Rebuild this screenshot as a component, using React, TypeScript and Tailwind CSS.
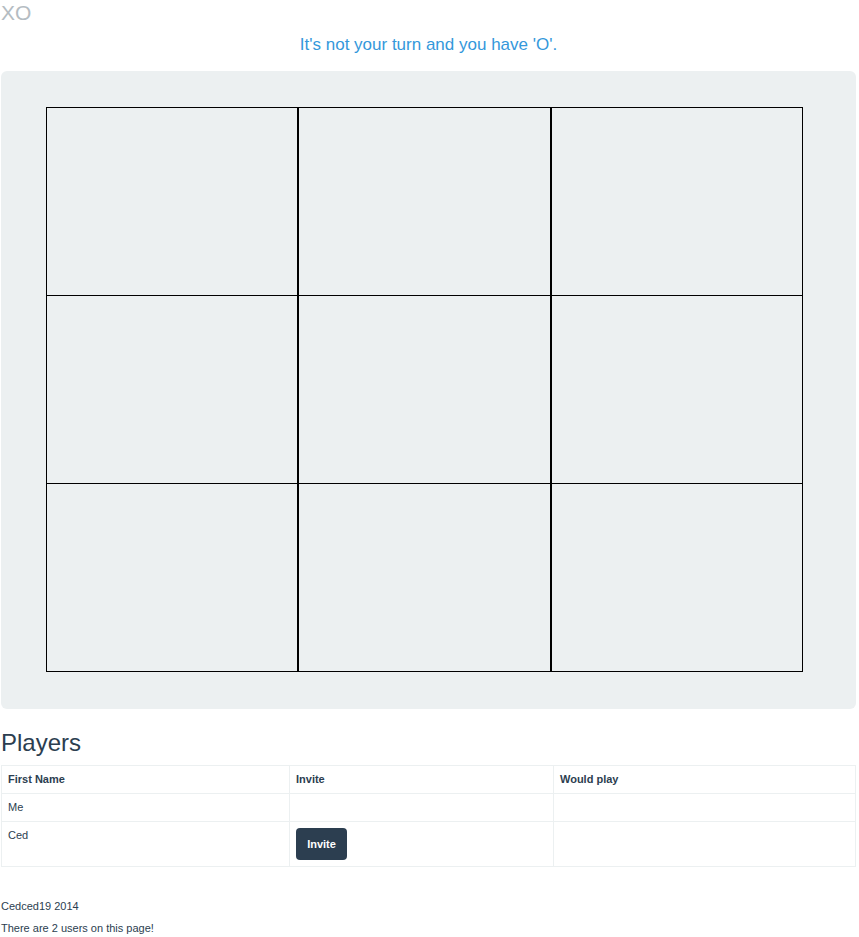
import React from "react"

const font = { fontFamily: '"Liberation Sans", Arial, sans-serif' }

function Board() {
  const rows = [0, 1, 2]
  return (
    <div className="w-[757px]">
      {rows.map((r) => (
        <div key={r} className="grid grid-cols-3">
          {rows.map((c) => (
            <div
              key={c}
              className={
                r === 2
                  ? "h-[189px] border border-black"
                  : "h-[188px] border-x border-t border-black"
              }
            />
          ))}
        </div>
      ))}
    </div>
  )
}

export default function App() {
  const players = [
    { name: "Me", invite: false },
    { name: "Ced", invite: true },
  ]

  return (
    <div style={font} className="ml-px w-[855px] text-[#2c3e50]">
      <div className="pt-px text-[21px] leading-[24px] text-[#b4bcc2]">XO</div>

      <p className="mt-[8px] mb-[14px] text-center text-[17px] leading-[24px] text-[#3498db]">
        It's not your turn and you have 'O'.
      </p>

      <div className="rounded-md bg-[#ecf0f1] pt-[36px] pb-[37px] pl-[45px]">
        <Board />
      </div>

      <h2 className="mt-[21px] mb-[9px] text-[24px] leading-[26px]">Players</h2>

      <table className="w-full table-fixed border-collapse border border-[#ecf0f1] text-[11px]">
        <thead>
          <tr>
            <th className="w-[288px] border border-[#ecf0f1] px-[6px] py-[7px] text-left leading-[13px] font-bold">
              First Name
            </th>
            <th className="w-[264px] border border-[#ecf0f1] px-[6px] py-[7px] text-left leading-[13px] font-bold">
              Invite
            </th>
            <th className="border border-[#ecf0f1] px-[6px] py-[7px] text-left leading-[13px] font-bold">
              Would play
            </th>
          </tr>
        </thead>
        <tbody>
          {players.map((p) => (
            <tr key={p.name}>
              <td className="border border-[#ecf0f1] px-[6px] py-[7px] align-top leading-[13px]">{p.name}</td>
              <td className="border border-[#ecf0f1] px-[6px] py-[6px] align-top leading-[13px]">
                {p.invite && (
                  <button className="h-[32px] w-[51px] rounded bg-[#2c3e50] text-[11px] font-bold text-white">
                    Invite
                  </button>
                )}
              </td>
              <td className="border border-[#ecf0f1] px-[6px] py-[7px] align-top leading-[13px]"></td>
            </tr>
          ))}
        </tbody>
      </table>

      <footer className="mt-[32px] text-[11px] leading-[15px]">
        <p>Cedced19 2014</p>
        <p className="mt-[7px]">There are 2 users on this page!</p>
      </footer>
    </div>
  )
}
